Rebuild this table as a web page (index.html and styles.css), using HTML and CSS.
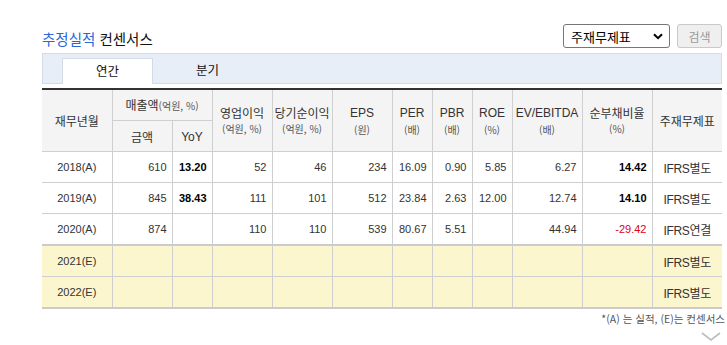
FILE: index.html
```html
<!DOCTYPE html>
<html lang="ko">
<head>
<meta charset="utf-8">
<link rel="stylesheet" href="styles.css">
</head>
<body>
<div class="wrap">
  <div class="head">
    <h2 class="title"><span class="blue">추정실적</span> 컨센서스</h2>
    <div class="tools">
      <div class="select"><span>주재무제표</span>
        <svg width="10" height="7" viewBox="0 0 10 7"><path d="M1 1.2 L5 5.2 L9 1.2" fill="none" stroke="#000" stroke-width="2"/></svg>
      </div>
      <button class="btn" disabled>검색</button>
    </div>
  </div>
  <div class="tabs">
    <div class="tab on">연간</div>
    <div class="tab">분기</div>
  </div>
  <table class="grid">
    <colgroup>
      <col style="width:70px"><col style="width:60px"><col style="width:40px"><col style="width:60px"><col style="width:60px"><col style="width:60px"><col style="width:40px"><col style="width:40px"><col style="width:40px"><col style="width:70px"><col style="width:70px"><col style="width:70px">
    </colgroup>
    <thead>
      <tr>
        <th rowspan="2">재무년월</th>
        <th colspan="2" class="sales">매출액<small>(억원, %)</small></th>
        <th rowspan="2">영업이익<br><small>(억원, %)</small></th>
        <th rowspan="2">당기순이익<br><small>(억원, %)</small></th>
        <th rowspan="2"><span class="en">EPS</span><br><small>(원)</small></th>
        <th rowspan="2"><span class="en">PER</span><br><small>(배)</small></th>
        <th rowspan="2"><span class="en">PBR</span><br><small>(배)</small></th>
        <th rowspan="2"><span class="en">ROE</span><br><small>(%)</small></th>
        <th rowspan="2"><span class="en">EV/EBITDA</span><br><small>(배)</small></th>
        <th rowspan="2">순부채비율<br><small>(%)</small></th>
        <th rowspan="2">주재무제표</th>
      </tr>
      <tr>
        <th>금액</th>
        <th><span class="en">YoY</span></th>
      </tr>
    </thead>
    <tbody>
      <tr>
        <td class="c">2018(A)</td><td>610</td><td class="b">13.20</td><td>52</td><td>46</td><td>234</td><td>16.09</td><td>0.90</td><td>5.85</td><td>6.27</td><td class="b">14.42</td><td class="c k">IFRS별도</td>
      </tr>
      <tr>
        <td class="c">2019(A)</td><td>845</td><td class="b">38.43</td><td>111</td><td>101</td><td>512</td><td>23.84</td><td>2.63</td><td>12.00</td><td>12.74</td><td class="b">14.10</td><td class="c k">IFRS별도</td>
      </tr>
      <tr>
        <td class="c">2020(A)</td><td>874</td><td></td><td>110</td><td>110</td><td>539</td><td>80.67</td><td>5.51</td><td></td><td>44.94</td><td class="neg">-29.42</td><td class="c k">IFRS연결</td>
      </tr>
      <tr class="est first">
        <td class="c">2021(E)</td><td></td><td></td><td></td><td></td><td></td><td></td><td></td><td></td><td></td><td></td><td class="c k">IFRS별도</td>
      </tr>
      <tr class="est last">
        <td class="c">2022(E)</td><td></td><td></td><td></td><td></td><td></td><td></td><td></td><td></td><td></td><td></td><td class="c k">IFRS별도</td>
      </tr>
    </tbody>
  </table>
  <p class="note">*(A) 는 실적, (E)는 컨센서스</p>
  <div class="more">
    <svg width="20" height="9" viewBox="0 0 20 9"><path d="M1 1 L10 8 L19 1" fill="none" stroke="#bdbdbd" stroke-width="1.6"/></svg>
  </div>
</div>
</body>
</html>
```

FILE: styles.css
```css
html, body {
  margin: 0;
  padding: 0;
  background: #fff;
}
body {
  font-family: "Noto Sans CJK KR", "Liberation Sans", sans-serif;
  color: #333;
}
.wrap {
  width: 680px;
  margin-left: 42px;
  padding-top: 24px;
}
.head {
  display: flex;
  justify-content: space-between;
  align-items: center;
  height: 24px;
}
.title {
  margin: 0;
  font-size: 14.5px;
  font-weight: normal;
  color: #111;
  line-height: 24px;
  position: relative;
  top: 3px;
}
.blue {
  color: #2b66d9;
}
.tools {
  display: flex;
  gap: 7px;
  align-items: center;
}
.select {
  box-sizing: border-box;
  width: 107px;
  height: 24px;
  border: 1px solid #767676;
  border-radius: 3px;
  display: flex;
  align-items: center;
  justify-content: space-between;
  padding: 0 6px 0 7px;
  font-size: 13px;
  color: #000;
  background: #fff;
}
.btn {
  box-sizing: border-box;
  width: 45px;
  height: 24px;
  border: 1px solid #c9c9c9;
  border-radius: 3px;
  background: #efefef;
  color: #9a9a9a;
  font-family: "Noto Sans CJK KR", sans-serif;
  font-size: 12px;
  padding: 0;
}
.tabs {
  box-sizing: border-box;
  margin-top: 5px;
  height: 31px;
  background: #e8eef8;
  border: 1px solid #d4dbe8;
  display: flex;
  align-items: flex-end;
  padding-left: 19px;
  gap: 9px;
}
.tab {
  box-sizing: border-box;
  width: 91px;
  height: 25px;
  text-align: center;
  font-size: 12.5px;
  line-height: 24px;
  color: #111;
}
.tab.on {
  background: #fff;
  border: 1px solid #d4dbe8;
  border-bottom: none;
  margin-bottom: -1px;
  height: 26px;
}
.grid {
  margin-top: 4px;
  width: 680px;
  table-layout: fixed;
  border-collapse: collapse;
  border-top: 2px solid #333;
  font-family: "Liberation Sans", "Noto Sans CJK KR", sans-serif;
  font-size: 11px;
}
.grid th {
  background: #f4f4f4;
  border: 1px solid #cfcfcf;
  font-family: "Noto Sans CJK KR", sans-serif;
  font-weight: normal;
  font-size: 12px;
  color: #333;
  height: 30px;
  padding: 0;
  line-height: 15px;
}
.grid th small {
  font-size: 10px;
  color: #555;
}
.grid th .en {
  font-family: "Liberation Sans", sans-serif;
  font-size: 12px;
}
.grid tr:first-child th {
  border-top: none;
}
.grid th:first-child,
.grid td:first-child {
  border-left: none;
}
.grid th:last-child,
.grid td:last-child {
  border-right: none;
}
.grid td {
  border: 1px solid #cfcfcf;
  height: 30px;
  padding: 0 5px 0 0;
  text-align: right;
  color: #333;
}
.grid td.c {
  text-align: center;
  padding: 0;
}
.grid td.k {
  font-size: 12px;
  letter-spacing: -0.3px;
}
.grid td.b {
  color: #000;
  font-weight: bold;
}
.grid td.neg {
  color: #e0001b;
}
.grid tr.est td {
  background: #fcf6cf;
}
.grid tr.first td {
  border-top: 2px solid #cbcbcb;
}
.grid tr.last td {
  border-bottom: 2px solid #cbcbcb;
}
.note {
  margin: 2px 0 0;
  line-height: 15px;
  text-align: right;
  font-size: 10.5px;
  color: #555;
  margin-right: -3px;
}
.more {
  display: flex;
  justify-content: flex-end;
  margin-top: 6px;
  margin-right: 1px;
  line-height: 0;
}
```
